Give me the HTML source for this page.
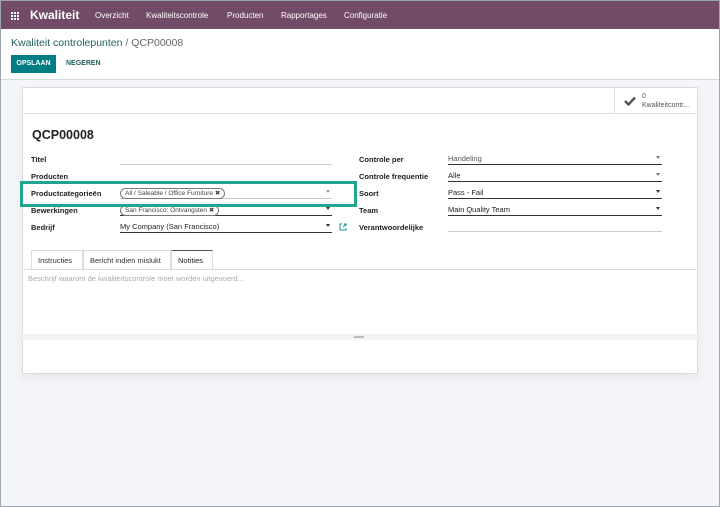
<!DOCTYPE html>
<html><head><style>
*{box-sizing:border-box;margin:0;padding:0}
body{width:720px;height:507px;overflow:hidden;font-family:"Liberation Sans",sans-serif;background:#f3f5f9;position:relative;font-size:8px;color:#222}
.frame{position:absolute;left:0;top:0;width:720px;height:507px;border:1px solid #9aa6b2;pointer-events:none}
.nav{position:absolute;left:0;top:0;width:720px;height:29px;background:#714b67;border-top:1px solid #4a3345;color:#fff}
.nav span{position:absolute;top:10px;font-size:8px}
.cp{position:absolute;left:0;top:29px;width:720px;height:51px;background:#fff;border-bottom:1px solid #d8d8d8}
.sheet{position:absolute;left:22px;top:87px;width:676px;height:287px;background:#fff;border:1px solid #ddd;box-shadow:0 4px 10px rgba(0,0,0,.06)}
.a{position:absolute}
.lbl{position:absolute;font-weight:bold;font-size:7.5px;color:#222}
.fld{position:absolute;height:13px;border-bottom:1px solid #ccc;font-size:7.5px;padding-top:2px}
.fld.d{border-bottom:1px solid #333}
.car{position:absolute;right:2px;top:4px;width:0;height:0;border-left:2px solid transparent;border-right:2px solid transparent;border-top:3px solid #333}
.tag{display:inline-block;border:1px solid #777;border-radius:7px;padding:0 4px;font-size:6.5px;line-height:9px;color:#444;margin-top:-1px}
.tab{position:absolute;top:250px;height:19px;border:1px solid #ddd;border-bottom:none;font-size:7.5px;padding:5px 6px;color:#333}
</style></head><body>
<div class="nav">
<svg class="a" style="left:11px;top:11px" width="9" height="8"><g fill="#fff"><rect x="0" y="0" width="2" height="2"/><rect x="3" y="0" width="2" height="2"/><rect x="6" y="0" width="2" height="2"/><rect x="0" y="3" width="2" height="2"/><rect x="3" y="3" width="2" height="2"/><rect x="6" y="3" width="2" height="2"/><rect x="0" y="6" width="2" height="2"/><rect x="3" y="6" width="2" height="2"/><rect x="6" y="6" width="2" height="2"/></g></svg>
<span style="left:30px;top:7px;font-size:12px;font-weight:bold">Kwaliteit</span>
<span style="left:95px">Overzicht</span><span style="left:146px">Kwaliteitscontrole</span><span style="left:227px">Producten</span><span style="left:281px">Rapportages</span><span style="left:344px">Configuratie</span>
</div>
<div class="cp">
<div class="a" style="left:11px;top:8px;font-size:10.5px;color:#1f5e5e">Kwaliteit controlepunten <span style="color:#666">/ QCP00008</span></div>
<div class="a" style="left:11px;top:26px;width:45px;height:18px;background:#017e84;color:#fff;font-size:7px;font-weight:bold;line-height:18px;text-align:center">OPSLAAN</div>
<div class="a" style="left:66px;top:31px;font-size:7px;font-weight:bold;color:#1f5e5e">NEGEREN</div>
</div>
<svg class="a" style="left:102px;top:90px" width="7" height="11"><path d="M1 1 L1 9 L3 7 L5 10 L6 9 L4 6.5 L6.5 6.5 Z" fill="#000"/></svg>
<div class="sheet">
<div class="a" style="left:0;top:25px;width:674px;border-top:1px solid #ddd"></div>
<div class="a" style="left:591px;top:0;height:25px;border-left:1px solid #ddd"></div>
<svg class="a" style="left:601px;top:8px" width="12" height="10"><path d="M1 5 L4.5 8.5 L11 1.5" stroke="#555" stroke-width="2.4" fill="none"/></svg>
<div class="a" style="left:619px;top:4px;font-size:7px;color:#555;line-height:9px">0<br>Kwaliteitcontr...</div>
<div class="a" style="left:9px;top:40px;font-size:12.5px;font-weight:bold">QCP00008</div>
</div>
<div class="lbl" style="left:31px;top:155px">Titel</div>
<div class="lbl" style="left:31px;top:172px">Producten</div>
<div class="lbl" style="left:31px;top:189px">Productcategorieën</div>
<div class="lbl" style="left:31px;top:206px">Bewerkingen</div>
<div class="lbl" style="left:31px;top:223px">Bedrijf</div>
<div class="fld" style="left:120px;top:152px;width:212px"></div>
<div class="fld" style="left:120px;top:169px;width:212px"></div>
<div class="fld" style="left:120px;top:186px;width:212px"><span class="tag">All / Saleable / Office Furniture ✖</span><i class="car" style="border-top-color:#999"></i></div>
<div class="fld d" style="left:120px;top:203px;width:212px"><span class="tag">San Francisco: Ontvangsten ✖</span><i class="car"></i></div>
<div class="fld d" style="left:120px;top:220px;width:212px">My Company (San Francisco)<i class="car"></i></div>
<svg class="a" style="left:339px;top:223px" width="8" height="8"><path d="M3 1H1V7H7V5M4 4L7 1M5 1H7V3" stroke="#1a9a8a" fill="none" stroke-width="1"/></svg>
<div class="a" style="left:20px;top:181px;width:337px;height:26px;border:3px solid #1fa590"></div>
<div class="lbl" style="left:359px;top:155px">Controle per</div>
<div class="lbl" style="left:359px;top:172px">Controle frequentie</div>
<div class="lbl" style="left:359px;top:189px">Soort</div>
<div class="lbl" style="left:359px;top:206px">Team</div>
<div class="lbl" style="left:359px;top:223px">Verantwoordelijke</div>
<div class="fld d" style="left:448px;top:152px;width:214px;color:#555">Handeling<i class="car" style="border-top-color:#777"></i></div>
<div class="fld d" style="left:448px;top:169px;width:214px">Alle<i class="car" style="border-top-color:#777"></i></div>
<div class="fld d" style="left:448px;top:186px;width:214px">Pass - Fail<i class="car"></i></div>
<div class="fld d" style="left:448px;top:203px;width:214px">Main Quality Team<i class="car"></i></div>
<div class="fld" style="left:448px;top:219px;width:214px"></div>
<div class="tab" style="left:31px;width:52px">Instructies</div>
<div class="tab" style="left:83px;width:88px">Bericht indien mislukt</div>
<div class="tab" style="left:171px;width:42px;border-top:1px solid #555;color:#222">Notities</div>
<div class="a" style="left:22px;top:269px;width:676px;height:71px;border-top:1px solid #ddd;border-bottom:1px solid #ddd"></div>
<div class="a" style="left:28px;top:274px;font-size:7.5px;color:#aaa">Beschrijf waarom de kwaliteitscontrole moet worden uitgevoerd...</div>
<div class="a" style="left:22px;top:334px;width:676px;height:6px;background:#f2f2f2"></div>
<div class="a" style="left:354px;top:336px;width:10px;height:2px;border-top:1px solid #bbb;border-bottom:1px solid #bbb"></div>
<div class="frame"></div>
</body></html>
